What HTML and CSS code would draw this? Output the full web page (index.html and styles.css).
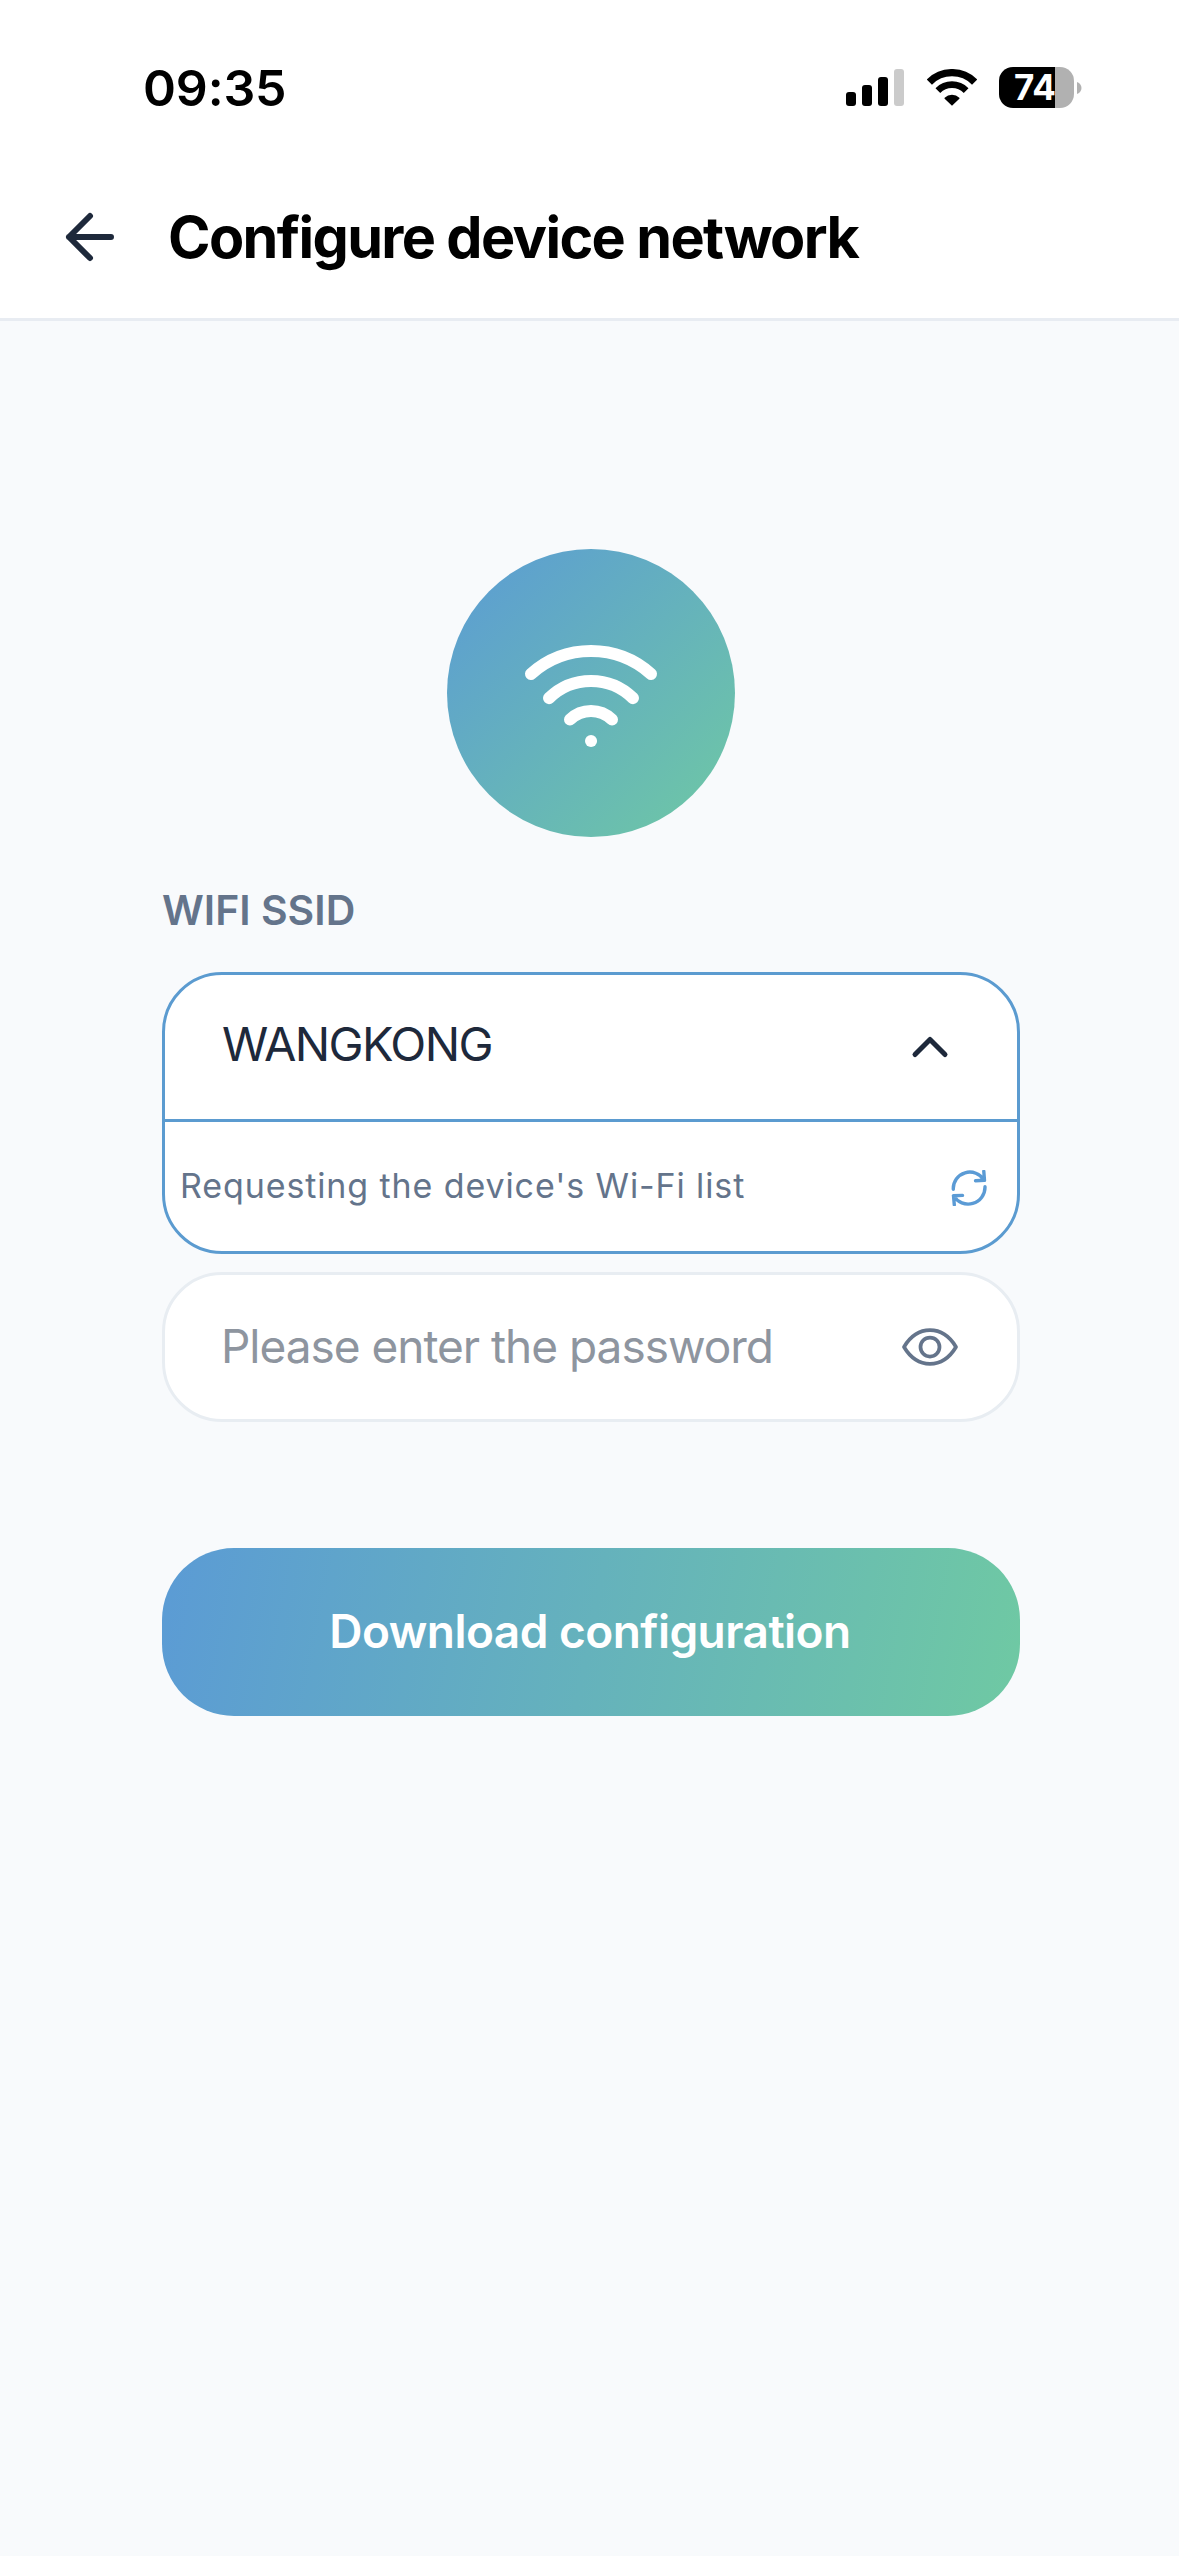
FILE: index.html
```html
<!DOCTYPE html>
<html lang="en">
<head>
<meta charset="utf-8">
<title>Configure device network</title>
<link rel="stylesheet" href="styles.css">
</head>
<body>
<div class="status-bar">
  <span class="clock">09:35</span>
  <div class="status-icons">
    <svg class="signal" viewBox="0 0 58 37" aria-hidden="true">
      <rect x="0" y="23" width="10" height="14" rx="3"/>
      <rect x="16" y="16" width="10" height="21" rx="3"/>
      <rect x="32" y="8" width="10" height="29" rx="3"/>
      <rect x="48" y="0" width="10" height="37" rx="3" fill="#cbcbcb"/>
    </svg>
    <svg class="wifi-status" viewBox="0 0 150 111" aria-hidden="true">
      <g fill="none" stroke="#000">
        <path stroke-width="22" d="M7.1 39.1A96 96 0 0 1 142.9 39.1"/>
        <path stroke-width="20" d="M32.6 64.6A60 60 0 0 1 117.4 64.6"/>
      </g>
      <path d="M75 110.500L53 89.500Q51.500 88 53 86.500A31 31 0 0 1 97 86.500Q98.500 88 97 89.500Z"/>
    </svg>
    <div class="battery">
      <div class="battery-body">74</div>
      <svg class="battery-nub" viewBox="0 0 5 12" aria-hidden="true"><path d="M0 0C3 1 4.500 3.500 4.500 6S3 11 0 12Z" fill="#b1b1b1"/></svg>
    </div>
  </div>
</div>

<header class="header">
  <svg class="back" viewBox="0 0 24 24" aria-hidden="true"><path d="M19 12H5M12 19l-7-7 7-7"/></svg>
  <h1 class="title">Configure device network</h1>
</header>

<main class="main">
  <div class="badge">
    <svg viewBox="0 0 24 24" aria-hidden="true">
      <path d="M12 20h.01"/>
      <path d="M2 8.820a15 15 0 0 1 20 0"/>
      <path d="M5 12.859a10 10 0 0 1 14 0"/>
      <path d="M8.500 16.429a5 5 0 0 1 7 0"/>
    </svg>
  </div>

  <div class="label">WIFI SSID</div>

  <div class="select">
    <div class="select-head">
      <span class="select-value">WANGKONG</span>
      <svg class="chevron" viewBox="0 0 24 24" aria-hidden="true"><path d="M18 15l-6-6-6 6"/></svg>
    </div>
    <div class="select-row">
      <span class="select-hint">Requesting the device's Wi-Fi list</span>
      <svg class="refresh" viewBox="0 0 36 36" aria-hidden="true">
        <path d="M2.300 19.300A16.500 16.500 0 0 1 33 10.200M32.800 1.300L33.500 10.300L24.500 10.700"/>
        <path d="M34 16.700A16.900 16.900 0 0 1 2.500 25.700M11.500 25.400L2.500 25.700L3.300 34.800"/>
      </svg>
    </div>
  </div>

  <div class="password">
    <span class="placeholder">Please enter the password</span>
    <svg class="eye" viewBox="0 0 60 60" aria-hidden="true">
      <path d="M4 30C10 20 19 13.200 30 13.200S50 20 56 30C50 40 41 46.800 30 46.800S10 40 4 30Z"/>
      <circle cx="30" cy="30" r="9.500"/>
    </svg>
  </div>

  <button class="submit" type="button">Download configuration</button>
</main>
</body>
</html>
```
FILE: styles.css
```css
* {
  box-sizing: border-box;
}

body {
  margin: 0;
  min-height: 2556px;
  display: flex;
  flex-direction: column;
  background: #f8fafc;
  font-family: Inter, "Liberation Sans", sans-serif;
  color: #1e293b;
}

svg {
  display: block;
  flex: none;
}

.status-bar {
  height: 156px;
  padding: 57px 98px 0 143px;
  display: flex;
  justify-content: space-between;
  align-items: flex-start;
  background: #fff;
  color: #000;
}

.clock {
  font-size: 50px;
  font-weight: 600;
  line-height: 62px;
  letter-spacing: -0.15px;
}

.status-icons {
  display: flex;
  align-items: center;
  height: 61px;
}

.signal {
  width: 58px;
  height: 37px;
  margin-right: 22.500px;
}

.wifi-status {
  width: 50px;
  height: 37px;
  margin-right: 22.500px;
}

.battery {
  display: flex;
  align-items: center;
  gap: 3px;
}

.battery-body {
  width: 75px;
  height: 41px;
  padding-left: 15px;
  border-radius: 14px;
  background: linear-gradient(90deg, #000 56px, #b1b1b1 56px);
  color: #fff;
  font-size: 35px;
  font-weight: 700;
  line-height: 41px;
}

.battery-nub {
  width: 5px;
  height: 12px;
  margin-right: -1px;
}

.header {
  height: 165px;
  padding-left: 54px;
  display: flex;
  align-items: center;
  gap: 42px;
  background: #fff;
  border-bottom: 3px solid #e8ecf2;
}

.back {
  width: 72px;
  height: 72px;
  fill: none;
  stroke: #1e293b;
  stroke-width: 2;
  stroke-linecap: round;
  stroke-linejoin: round;
}

.title {
  margin: 0;
  font-size: 57.500px;
  font-weight: 700;
  line-height: 72px;
  letter-spacing: -1.620px;
  color: #000;
  white-space: nowrap;
}

.main {
  padding: 228px 159px 0 162px;
  display: flex;
  flex-direction: column;
}

.badge {
  align-self: center;
  width: 288px;
  height: 288px;
  border-radius: 50%;
  display: flex;
  align-items: center;
  justify-content: center;
  background: linear-gradient(135deg, #5b9bd5, #6fc9a3);
}

.badge svg {
  width: 144px;
  height: 144px;
  fill: none;
  stroke: #fff;
  stroke-width: 2;
  stroke-linecap: round;
  stroke-linejoin: round;
}

.label {
  margin: 48px 0 37px;
  font-size: 41px;
  font-weight: 600;
  line-height: 50px;
  color: #64748b;
}

.select {
  height: 282px;
  border: 3px solid #5b9bd0;
  border-radius: 60px;
  background: #fff;
  overflow: hidden;
}

.select-head {
  height: 147px;
  padding: 0 57px;
  display: flex;
  align-items: center;
  justify-content: space-between;
  border-bottom: 3px solid #5b9bd0;
}

.select-value {
  font-size: 47px;
  line-height: 58px;
  letter-spacing: -1.640px;
  margin-bottom: 6px;
}

.chevron {
  width: 60px;
  height: 60px;
  fill: none;
  stroke: #1e293b;
  stroke-width: 2;
  stroke-linecap: round;
  stroke-linejoin: round;
}

.select-row {
  height: 129px;
  padding: 0 30px 0 15px;
  display: flex;
  align-items: center;
  justify-content: space-between;
}

.select-hint {
  font-size: 34px;
  line-height: 42px;
  letter-spacing: 0.890px;
  margin-bottom: 2px;
  color: #64748b;
}

.refresh {
  width: 36px;
  height: 36px;
  margin-top: 3px;
  fill: none;
  stroke: #5b9bd5;
  stroke-width: 3.400;
  stroke-linecap: round;
  stroke-linejoin: round;
}

.password {
  height: 150px;
  margin-top: 18px;
  padding: 0 57px 0 56px;
  display: flex;
  align-items: center;
  justify-content: space-between;
  border: 3px solid #e8edf2;
  border-radius: 60px;
  background: #fff;
}

.placeholder {
  font-size: 46px;
  line-height: 58px;
  letter-spacing: -1.020px;
  margin-bottom: 2px;
  color: #8e959f;
}

.eye {
  width: 60px;
  height: 60px;
  fill: none;
  stroke: #64748b;
  stroke-width: 3.750;
  stroke-linejoin: round;
}

.submit {
  height: 168px;
  margin-top: 126px;
  padding: 0 2px 2px 0;
  border: 0;
  border-radius: 72px;
  background: linear-gradient(101deg, #5b9bd5, #6fc9a3);
  color: #fff;
  font: 600 46px/58px Inter, "Liberation Sans", sans-serif;
  letter-spacing: -0.540px;
}
```
